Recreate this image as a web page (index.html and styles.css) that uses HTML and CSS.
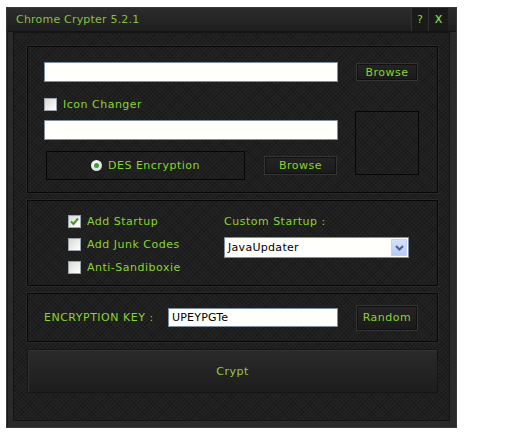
FILE: index.html
```html
<!DOCTYPE html>
<html>
<head>
<meta charset="utf-8">
<link rel="stylesheet" href="styles.css">
</head>
<body>
<div class="window">
  <div class="titlebar">
    <span class="title">Chrome Crypter 5.2.1</span>
    <div class="tbtns">
      <span class="tbtn help">?</span>
      <span class="tbtn close">X</span>
    </div>
  </div>
  <div class="main">
    <div class="panel p1">
      <div class="col-left">
        <div class="input wide"></div>
        <div class="chkrow icon-row"><span class="chk"></span><span class="lbl">Icon Changer</span></div>
        <div class="input wide second"></div>
        <div class="des-row">
          <div class="des-box"><span class="radio"><span class="dot"></span></span><span class="lbl">DES Encryption</span></div>
          <div class="btn browse2">Browse</div>
        </div>
      </div>
      <div class="col-right">
        <div class="btn browse1">Browse</div>
        <div class="imgbox"></div>
      </div>
    </div>
    <div class="panel p2">
      <div class="checks">
        <div class="chkrow"><span class="chk checked"><svg width="11" height="11" viewBox="0 0 11 11"><path d="M2 5.5 L4.5 8 L9 2.5" fill="none" stroke="#3f9a2a" stroke-width="2"/></svg></span><span class="lbl">Add Startup</span></div>
        <div class="chkrow"><span class="chk"></span><span class="lbl">Add Junk Codes</span></div>
        <div class="chkrow"><span class="chk"></span><span class="lbl">Anti-Sandiboxie</span></div>
      </div>
      <div class="custom">
        <div class="lbl custom-lbl">Custom Startup :</div>
        <div class="select"><span class="sel-text">JavaUpdater</span><span class="sel-arrow"><svg width="9" height="6" viewBox="0 0 9 6"><path d="M1 1 L4.5 4.5 L8 1" fill="none" stroke="#4d6185" stroke-width="2"/></svg></span></div>
      </div>
    </div>
    <div class="panel p3">
      <span class="lbl key-lbl">ENCRYPTION KEY :</span>
      <div class="input key"><span class="in-text">UPEYPGTe</span></div>
      <div class="btn random">Random</div>
    </div>
    <div class="crypt">Crypt</div>
  </div>
</div>
</body>
</html>
```
FILE: styles.css
```css
html, body { margin: 0; padding: 0; background: #ffffff; }
body { font-family: "DejaVu Sans", Verdana, sans-serif; font-size: 11px; }

.window {
  margin: 7px 0 0 6px;
  width: 451px;
  height: 421px;
  box-sizing: border-box;
  border: 1px solid #383838;
  background: #2a2a2a;
  display: flex;
  flex-direction: column;
  box-shadow: inset 1px 1px 0 #1a1a1a;
}
.titlebar {
  height: 23px;
  border-bottom: 1px solid #131313;
  background: linear-gradient(#2c2c2c, #1e1e1e);
  display: flex;
  align-items: center;
  padding-left: 9px;
}
.title { color: #86c23a; font-size: 11px; letter-spacing: 0.2px; }
.tbtns { margin-left: auto; margin-right: 8px; display: flex; height: 23px; }
.tbtn {
  display: flex; align-items: center; justify-content: center;
  color: #8fd43a; font-size: 11px;
  background: #1a1a1a;
  border-left: 1px solid #333;
  height: 23px;
}
.help { width: 16px; }
.close { width: 19px; color: #9ae83c; font-weight: normal; text-shadow: 0 0 2px rgba(60,80,170,0.7); }

.main {
  flex: 1;
  margin: 0 6px 6px 6px;
  border: 1px solid #141414;
  background-color: #232323;
  background-image:
    repeating-linear-gradient(45deg, rgba(0,0,0,0.18) 0 1px, transparent 1px 3px),
    repeating-linear-gradient(-45deg, rgba(0,0,0,0.18) 0 1px, transparent 1px 3px);
  padding: 13px 11px 0 13px;
  display: flex;
  flex-direction: column;
  gap: 7px;
}
.panel {
  width: 411px;
  box-sizing: border-box;
  border: 1px solid #070707;
  box-shadow: 0 0 0 1px rgba(60,60,60,0.35);
}
.lbl { color: #8ad52b; font-size: 11px; white-space: nowrap; letter-spacing: 0.5px; }

.input {
  box-sizing: border-box;
  background: #fffffc;
  border: 1px solid #7b8ea4;
  height: 20px;
}
.btn {
  box-sizing: border-box;
  display: flex; align-items: center; justify-content: center;
  color: #8ad52b; font-size: 11px; letter-spacing: 0.5px;
  background: linear-gradient(#242424, #1a1a1a);
  border: 1px solid #343434;
  box-shadow: inset 0 0 0 1px #111;
}

/* panel 1 */
.p1 { height: 147px; display: flex; }
.col-left { margin-left: 16px; width: 294px; display: flex; flex-direction: column; }
.wide { width: 294px; margin-top: 15px; }
.wide.second { margin-top: 9px; }
.chkrow { display: flex; align-items: center; height: 13px; }
.icon-row { margin-top: 16px; }
.chk {
  width: 13px; height: 13px; box-sizing: border-box;
  border: 1px solid #9aa4ad;
  background: linear-gradient(135deg, #d8d8d4, #ffffff);
  margin-right: 6px;
  display: flex; align-items: center; justify-content: center;
}
.des-row { margin-top: 11px; display: flex; align-items: center; }
.des-box {
  margin-left: 2px; width: 199px; height: 29px; box-sizing: border-box;
  border: 1px solid #060606;
  display: flex; align-items: center; padding-left: 44px;
}
.radio {
  width: 11px; height: 11px; border-radius: 50%;
  background: radial-gradient(circle at 40% 35%, #ffffff, #c9ced6);
  display: flex; align-items: center; justify-content: center;
  margin-right: 6px;
}
.dot { width: 5px; height: 5px; border-radius: 50%; background: #3fa030; }
.browse2 { margin-left: 19px; width: 73px; height: 19px; }

.col-right { margin-left: 18px; display: flex; flex-direction: column; }
.browse1 { margin-top: 16px; width: 62px; height: 18px; }
.imgbox {
  margin-top: 30px; margin-left: -1px; width: 64px; height: 64px; box-sizing: border-box;
  border: 1px solid #060606;
}

/* panel 2 */
.p2 { height: 86px; display: flex; padding: 14px 0 0 40px; }
.checks { width: 156px; display: flex; flex-direction: column; gap: 10px; }
.custom { display: flex; flex-direction: column; }
.custom-lbl { height: 13px; line-height: 13px; }
.select {
  margin-top: 9px; width: 185px; height: 21px; box-sizing: border-box;
  background: #fffffc; border: 1px solid #7b8ea4;
  display: flex; align-items: center;
}
.sel-text { color: #000; padding-left: 3px; flex: 1; letter-spacing: 0.3px; }
.sel-arrow {
  width: 16px; height: 17px; margin-right: 1px;
  background: linear-gradient(#d6e1fb, #b8caf6);
  border: 1px solid #c4d2f0; box-sizing: border-box;
  display: flex; align-items: center; justify-content: center;
}

/* panel 3 */
.p3 { height: 49px; display: flex; align-items: center; padding-left: 16px; }
.key-lbl { width: 124px; }
.key { width: 170px; height: 19px; display: flex; align-items: center; }
.in-text { color: #000; padding-left: 3px; letter-spacing: 0.2px; }
.random { margin-left: 18px; width: 62px; height: 26px; }

.crypt {
  width: 411px; height: 44px; box-sizing: border-box;
  background: linear-gradient(#2a2a2a, #1d1d1d);
  border: 1px solid #151515;
  box-shadow: inset 0 1px 0 #333, inset 1px 0 0 #2e2e2e;
  display: flex; align-items: center; justify-content: center;
  color: #95cc45; font-size: 11px; letter-spacing: 0.5px;
}
```
